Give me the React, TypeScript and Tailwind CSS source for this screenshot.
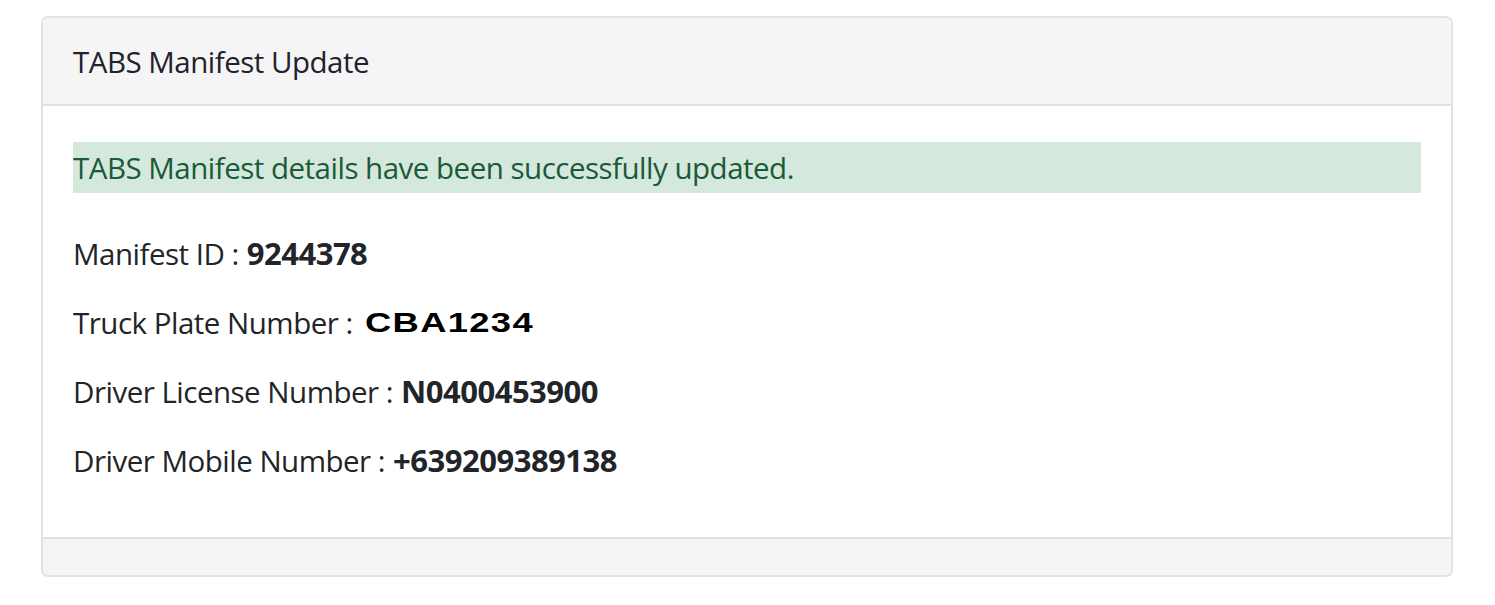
export default function App() {
  const rows = [
    { label: "Manifest ID :", value: "9244378" },
    { label: "Truck Plate Number :", value: "CBA1234", plate: true },
    { label: "Driver License Number :", value: "N0400453900" },
    { label: "Driver Mobile Number :", value: "+639209389138" },
  ];

  return (
    <div className="w-[1495px] h-[605px] bg-white pt-[16px] pl-[41px]" style={{ fontFamily: '"Open Sans", sans-serif' }}>
      <div className="w-[1412px] h-[561px] flex flex-col border-2 border-[#e2e2e2] rounded-[7px] overflow-hidden">
        <div className="h-[88px] shrink-0 bg-[#f5f5f5] border-b-2 border-[#e2e2e2] flex items-center px-[30px]">
          <h1 className="text-[29.5px] text-[#22222e] tracking-[-0.5px] leading-none pt-[2px]">TABS Manifest Update</h1>
        </div>

        <div className="flex-1 bg-white px-[30px] pt-[36px]">
          <div className="h-[51px] bg-[#d4e8de] flex items-center">
            <p className="text-[29.5px] text-[#1b5a36] tracking-[-0.5px] leading-none">
              TABS Manifest details have been successfully updated.
            </p>
          </div>

          <div className="flex flex-col mt-[26px]">
            {rows.map((r) => (
              <div key={r.label} className="h-[69px] flex items-center text-[29.5px] text-[#212529] tracking-[-0.5px] leading-none">
                <span>{r.label}</span>
                {r.plate ? (
                  <span
                    className="ml-[12px] inline-block origin-left scale-x-[1.3] text-[28px] font-bold tracking-[1px] text-black"
                    style={{ fontFamily: '"Liberation Sans", Arial, sans-serif' }}
                  >
                    {r.value}
                  </span>
                ) : (
                  <span className="ml-[8px] text-[31px] font-bold">{r.value}</span>
                )}
              </div>
            ))}
          </div>
        </div>

        <div className="h-[38px] shrink-0 bg-[#f5f5f5] border-t-2 border-[#e2e2e2]" />
      </div>
    </div>
  );
}
